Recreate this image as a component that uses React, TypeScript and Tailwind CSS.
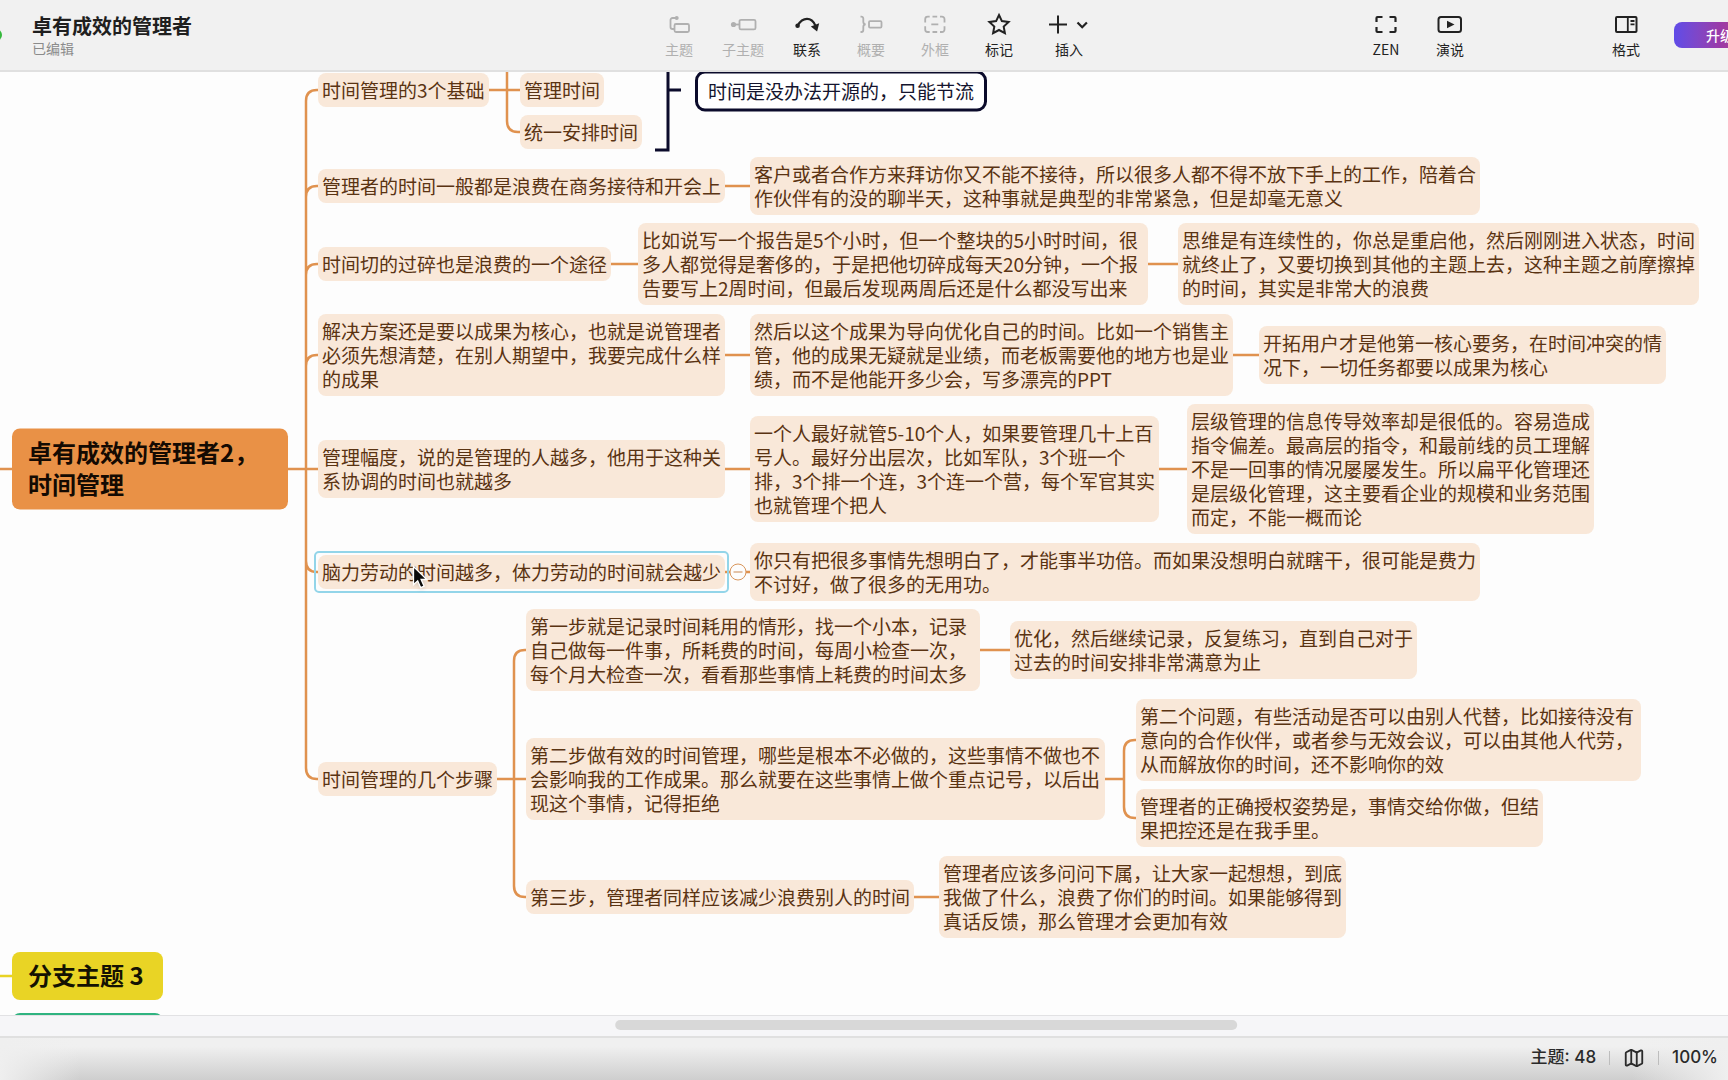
import type { ReactNode } from "react";
import { Map } from "lucide-react";

interface Topic {
  id: string;
  x: number;
  // vertical centre of the topic on the canvas
  y: number;
  minWidth: number;
  lines: string[];
  selected?: boolean;
}

const TOPICS: Topic[] = [
  { id: "base", x: 318, y: 18, minWidth: 171, lines: ["时间管理的3个基础"] },
  { id: "base-manage", x: 520, y: 18, minWidth: 84, lines: ["管理时间"] },
  { id: "base-plan", x: 520, y: 60, minWidth: 121, lines: ["统一安排时间"] },
  { id: "waste", x: 318, y: 114, minWidth: 402, lines: ["管理者的时间一般都是浪费在商务接待和开会上"] },
  {
    id: "waste-visit",
    x: 750,
    y: 114,
    minWidth: 718,
    lines: [
      "客户或者合作方来拜访你又不能不接待，所以很多人都不得不放下手上的工作，陪着合",
      "作伙伴有的没的聊半天，这种事就是典型的非常紧急，但是却毫无意义",
    ],
  },
  { id: "pieces", x: 318, y: 192, minWidth: 290, lines: ["时间切的过碎也是浪费的一个途径"] },
  {
    id: "pieces-report",
    x: 638,
    y: 192,
    minWidth: 510,
    lines: [
      "比如说写一个报告是5个小时，但一个整块的5小时时间，很",
      "多人都觉得是奢侈的，于是把他切碎成每天20分钟，一个报",
      "告要写上2周时间，但最后发现两周后还是什么都没写出来",
    ],
  },
  {
    id: "pieces-mind",
    x: 1178,
    y: 192,
    minWidth: 513,
    lines: [
      "思维是有连续性的，你总是重启他，然后刚刚进入状态，时间",
      "就终止了，又要切换到其他的主题上去，这种主题之前摩擦掉",
      "的时间，其实是非常大的浪费",
    ],
  },
  {
    id: "solution",
    x: 318,
    y: 283,
    minWidth: 402,
    lines: [
      "解决方案还是要以成果为核心，也就是说管理者",
      "必须先想清楚，在别人期望中，我要完成什么样",
      "的成果",
    ],
  },
  {
    id: "solution-result",
    x: 750,
    y: 283,
    minWidth: 480,
    lines: [
      "然后以这个成果为导向优化自己的时间。比如一个销售主",
      "管，他的成果无疑就是业绩，而老板需要他的地方也是业",
      "绩，而不是他能开多少会，写多漂亮的PPT",
    ],
  },
  {
    id: "solution-user",
    x: 1259,
    y: 283,
    minWidth: 402,
    lines: ["开拓用户才是他第一核心要务，在时间冲突的情", "况下，一切任务都要以成果为核心"],
  },
  {
    id: "span",
    x: 318,
    y: 397,
    minWidth: 402,
    lines: ["管理幅度，说的是管理的人越多，他用于这种关", "系协调的时间也就越多"],
  },
  {
    id: "span-army",
    x: 750,
    y: 397,
    minWidth: 407,
    lines: [
      "一个人最好就管5-10个人，如果要管理几十上百",
      "号人。最好分出层次，比如军队，3个班一个",
      "排，3个排一个连，3个连一个营，每个军官其实",
      "也就管理个把人",
    ],
  },
  {
    id: "span-layer",
    x: 1187,
    y: 397,
    minWidth: 402,
    lines: [
      "层级管理的信息传导效率却是很低的。容易造成",
      "指令偏差。最高层的指令，和最前线的员工理解",
      "不是一回事的情况屡屡发生。所以扁平化管理还",
      "是层级化管理，这主要看企业的规模和业务范围",
      "而定，不能一概而论",
    ],
  },
  {
    id: "brain",
    x: 318,
    y: 500,
    minWidth: 402,
    lines: ["脑力劳动的时间越多，体力劳动的时间就会越少"],
    selected: true,
  },
  {
    id: "brain-think",
    x: 750,
    y: 500,
    minWidth: 724,
    lines: [
      "你只有把很多事情先想明白了，才能事半功倍。而如果没想明白就瞎干，很可能是费力",
      "不讨好，做了很多的无用功。",
    ],
  },
  { id: "steps", x: 318, y: 707, minWidth: 177, lines: ["时间管理的几个步骤"] },
  {
    id: "step1",
    x: 526,
    y: 578,
    minWidth: 454,
    lines: [
      "第一步就是记录时间耗用的情形，找一个小本，记录",
      "自己做每一件事，所耗费的时间，每周小检查一次，",
      "每个月大检查一次，看看那些事情上耗费的时间太多",
    ],
  },
  {
    id: "step1-repeat",
    x: 1010,
    y: 578,
    minWidth: 402,
    lines: ["优化，然后继续记录，反复练习，直到自己对于", "过去的时间安排非常满意为止"],
  },
  {
    id: "step2",
    x: 526,
    y: 707,
    minWidth: 579,
    lines: [
      "第二步做有效的时间管理，哪些是根本不必做的，这些事情不做也不",
      "会影响我的工作成果。那么就要在这些事情上做个重点记号，以后出",
      "现这个事情，记得拒绝",
    ],
  },
  {
    id: "step2-replace",
    x: 1136,
    y: 668,
    minWidth: 505,
    lines: [
      "第二个问题，有些活动是否可以由别人代替，比如接待没有",
      "意向的合作伙伴，或者参与无效会议，可以由其他人代劳，",
      "从而解放你的时间，还不影响你的效",
    ],
  },
  {
    id: "step2-grant",
    x: 1136,
    y: 746,
    minWidth: 402,
    lines: ["管理者的正确授权姿势是，事情交给你做，但结", "果把控还是在我手里。"],
  },
  { id: "step3", x: 526, y: 825, minWidth: 383, lines: ["第三步，管理者同样应该减少浪费别人的时间"] },
  {
    id: "step3-ask",
    x: 939,
    y: 825,
    minWidth: 402,
    lines: [
      "管理者应该多问问下属，让大家一起想想，到底",
      "我做了什么，浪费了你们的时间。如果能够得到",
      "真话反馈，那么管理才会更加有效",
    ],
  },
];

// straight links: [from x, to x, y]
const LINKS = [
  [0, 14, 397],
  [288, 318, 397],
  [480, 520, 18],
  [700, 750, 114],
  [600, 638, 192],
  [1140, 1178, 192],
  [700, 750, 283],
  [1220, 1259, 283],
  [700, 750, 397],
  [1150, 1187, 397],
  [700, 750, 500],
  [480, 526, 707],
  [970, 1010, 578],
  [1100, 1124, 707],
  [900, 939, 825],
];

const RADIUS = 11;

// vertical trunks with the y of every branch that bends off them
const TRUNKS = [
  { x: 306, y: 397, endX: 318, branches: [18, 114, 192, 283, 500, 707] },
  { x: 507, y: -20, endX: 520, branches: [60] },
  { x: 514, y: 707, endX: 526, branches: [578, 825] },
  { x: 1124, y: 707, endX: 1136, branches: [668, 746] },
];

function trunkPath({ x, y, endX, branches }: (typeof TRUNKS)[number]) {
  const bends = branches.map((b) => (b < y ? b + RADIUS : b - RADIUS));
  const top = Math.min(y, ...bends);
  const bottom = Math.max(y, ...bends);
  const curves = branches.map((b, i) => `M${x} ${bends[i]}Q${x} ${b} ${x + RADIUS} ${b}H${endX}`);
  return `M${x} ${top}V${bottom}${curves.join("")}`;
}

function Connectors() {
  return (
    <svg className="absolute inset-0 w-full h-full" fill="none" strokeWidth="2.5" aria-hidden="true">
      <g stroke="#e0924f">
        {LINKS.map(([from, to, y]) => (
          <path key={`${from}-${y}`} d={`M${from} ${y}H${to}`} />
        ))}
        {TRUNKS.map((trunk) => (
          <path key={trunk.x} d={trunkPath(trunk)} />
        ))}
      </g>
      <path d="M0 904H14" stroke="#e8d324" />
      <path d="M668 -4V78H655M668 18H681" stroke="#0b0b2b" strokeWidth="3" />
    </svg>
  );
}

function TopicBox({ topic }: { topic: Topic }) {
  return (
    <div
      className="absolute -translate-y-1/2 rounded-lg bg-[#f9e8d9] px-1 py-[5px] text-[19px] leading-6 text-[#5a3312] whitespace-nowrap"
      style={{ left: topic.x, top: topic.y, minWidth: topic.minWidth }}
    >
      {topic.lines.map((line) => (
        <p key={line}>{line}</p>
      ))}
      {topic.selected && (
        <span className="absolute -inset-1 rounded-[5px] border-2 border-[#93d5e9] pointer-events-none" />
      )}
    </div>
  );
}

function Icon({ children }: { children: ReactNode }) {
  return (
    <svg
      viewBox="0 0 28 24"
      className="w-7 h-6"
      fill="none"
      stroke="currentColor"
      strokeWidth="1.8"
      aria-hidden="true"
    >
      {children}
    </svg>
  );
}

interface ToolButtonProps {
  label: string;
  disabled?: boolean;
  wide?: boolean;
  children: ReactNode;
}

function ToolButton({ label, disabled, wide, children }: ToolButtonProps) {
  return (
    <button
      type="button"
      disabled={disabled}
      className={`flex flex-col items-center gap-[3px] pt-px shrink-0 text-sm leading-5 text-[#222] disabled:text-[#b0b0b0] ${
        wide ? "w-[76px]" : "w-16"
      }`}
    >
      <span className="flex items-center h-6">{children}</span>
      {label}
    </button>
  );
}

function Toolbar() {
  return (
    <header className="flex items-center h-[72px] shrink-0 bg-[#f1f1f1] border-b-2 border-[#e0e0e0] overflow-hidden">
      <div className="flex items-center flex-1">
        <span className="w-3 h-3 -ml-[10px] rounded-full bg-[#35b83c]" />
        <div className="ml-[30px] pb-[2px]">
          <h1 className="text-xl leading-7 font-bold text-[#1f1f1f]">卓有成效的管理者</h1>
          <p className="text-sm leading-4 text-[#8b8b8b]">已编辑</p>
        </div>
      </div>

      <nav className="flex pl-[26px]">
        <ToolButton label="主题" disabled>
          <Icon>
            <rect x="9.5" y="12" width="14.5" height="8" rx="1.5" />
            <path d="M11 6H7.5a2 2 0 0 0-2 2v7a2 2 0 0 0 2 2h2" />
            <circle cx="11.7" cy="6" r="2" fill="currentColor" stroke="none" />
          </Icon>
        </ToolButton>
        <ToolButton label="子主题" disabled>
          <Icon>
            <circle cx="4.5" cy="12.5" r="2.6" fill="currentColor" stroke="none" />
            <path d="M5 12.5h5.5" />
            <rect x="10.5" y="7.8" width="16" height="9.6" rx="1.5" />
          </Icon>
        </ToolButton>
        <ToolButton label="联系">
          <Icon>
            <circle cx="4.6" cy="13.7" r="2.3" fill="currentColor" stroke="none" />
            <path d="M4.6 13.5C7.2 9 10.4 6.8 14 6.8c3.8 0 6.5 2.4 8.3 6.6" strokeWidth="2.2" />
            <path d="M17.8 14.4l8.4-3.2-2.1 8.2z" fill="currentColor" stroke="none" />
          </Icon>
        </ToolButton>
        <ToolButton label="概要" disabled>
          <Icon>
            <path d="M3.5 4.6h.8a2 2 0 0 1 2 2v3.2q0 2.5 2.4 2.5-2.4 0-2.4 2.5V18a2 2 0 0 1-2 2h-.8" />
            <rect x="12" y="9.2" width="12.5" height="6.4" rx="1" />
          </Icon>
        </ToolButton>
        <ToolButton label="外框" disabled>
          <Icon>
            <path d="M4.2 10.5V7.2a2.5 2.5 0 0 1 2.5-2.5h2M19 4.7h2a2.5 2.5 0 0 1 2.5 2.5v3.3M23.5 14.2v3.3A2.5 2.5 0 0 1 21 20h-2M8.7 20h-2a2.5 2.5 0 0 1-2.5-2.5v-3.3M11.5 4.7h4.7M11.5 20h4.7M10.3 12.3h7" />
          </Icon>
        </ToolButton>
        <ToolButton label="标记">
          <Icon>
            <path
              d="M14 3l2.9 6.1 6.7.9-4.9 4.6 1.2 6.6-5.9-3.2-5.9 3.2 1.2-6.600-4.900-4.600 6.700-.9z"
              strokeWidth="2"
            />
          </Icon>
        </ToolButton>
        <ToolButton label="插入" wide>
          <svg
            viewBox="0 0 40 24"
            className="w-10 h-6"
            fill="none"
            stroke="currentColor"
            strokeWidth="2"
            aria-hidden="true"
          >
            <path d="M9 3.5v18M0 12.5h18" />
            <path d="M28.5 10.5l4.700 4.800 4.700-4.800" strokeWidth="2.2" />
          </svg>
        </ToolButton>
      </nav>

      <div className="flex items-center justify-end flex-1">
        <ToolButton label="ZEN">
          <Icon>
            <path
              d="M4.5 10V6a1 1 0 0 1 1-1h5M17.5 5h5a1 1 0 0 1 1 1v4M23.5 15v4a1 1 0 0 1-1 1h-5M10.5 20h-5a1 1 0 0 1-1-1v-4"
              strokeWidth="2.2"
            />
          </Icon>
        </ToolButton>
        <ToolButton label="演说">
          <Icon>
            <rect x="2.5" y="5" width="22.5" height="15" rx="2.5" strokeWidth="2" />
            <path d="M11 8.800v7.400l7.500-3.700z" fill="currentColor" stroke="none" />
          </Icon>
        </ToolButton>
        <div className="flex items-center ml-28">
          <ToolButton label="格式">
            <Icon>
              <rect x="4" y="5" width="20.500" height="15" rx="1" strokeWidth="2" />
              <path d="M15.800 5v15M18.500 9h4M18.500 12.300h4" />
            </Icon>
          </ToolButton>
          <button
            type="button"
            className="ml-4 -mr-[38px] w-[92px] h-[26px] shrink-0 rounded-lg bg-linear-to-r from-[#5f4be8] via-[#9a3aa8] to-[#d03a6a] text-sm font-medium text-white"
          >
            升级
          </button>
        </div>
      </div>
    </header>
  );
}

function Canvas() {
  return (
    <main className="relative flex-1 overflow-hidden bg-[#fdfdfd]">
      <Connectors />

      <div className="absolute left-[12px] top-[397px] -translate-y-1/2 w-[276px] rounded-lg bg-[#e99146] px-4 pt-[7px] pb-[10px] text-2xl leading-8 font-bold text-[#140a02]">
        <p>卓有成效的管理者2，</p>
        <p>时间管理</p>
      </div>

      {TOPICS.map((topic) => (
        <TopicBox key={topic.id} topic={topic} />
      ))}

      <div className="absolute left-[695px] top-[19px] -translate-y-1/2 rounded-[10px] border-[3px] border-[#0b0b2b] bg-white px-[10px] pt-[5px] pb-[6px] text-[19px] leading-6 text-[#14142e] whitespace-nowrap">
        时间是没办法开源的，只能节流
      </div>

      <button
        type="button"
        aria-label="收起"
        className="absolute left-[738px] top-[500px] -translate-x-1/2 -translate-y-1/2 flex items-center justify-center w-[17px] h-[17px] rounded-full border border-[#d9965c] bg-[#fdfdfd]"
      >
        <span className="w-[9px] h-px bg-[#c98a55]" />
      </button>

      <div className="absolute left-[12px] top-[880px] min-w-[151px] rounded-lg bg-[#e9d425] px-4 pt-[7px] pb-[9px] text-2xl leading-8 font-bold text-[#141202]">
        分支主题 3
      </div>
      <div className="absolute left-[12px] top-[941px] w-[151px] h-12 rounded-lg bg-[#2fb380]" />

      <svg
        viewBox="0 0 18 26"
        className="absolute left-[412px] top-[493px] w-[18px] h-[26px] drop-shadow-sm"
        aria-hidden="true"
      >
        <path
          d="M1.500 1.500v18.300l4.200-4 3 6.900 3.400-1.500-3-6.700h5.700z"
          fill="#0a0a0a"
          stroke="#fff"
          strokeWidth="1.300"
        />
      </svg>
    </main>
  );
}

function StatusBar() {
  return (
    <footer className="relative flex items-center justify-end h-11 shrink-0 border-t-2 border-[#e0e0e0] bg-linear-to-b from-[#f0f0f0] from-20% to-[#cecece] pr-[10px] pb-[2px] font-[Inter,'Noto_Sans_CJK_SC',sans-serif] text-[17px] font-medium text-[#2a2a2a]">
      <div className="absolute inset-y-0 left-0 w-20 bg-linear-to-r from-[#efefef] to-transparent" />
      <div className="absolute inset-y-0 right-0 w-24 bg-linear-to-l from-[#efefef] to-transparent" />
      <div className="relative flex items-center gap-[13px]">
        <span>主题: 48</span>
        <span className="w-px h-[14px] bg-[#bdbdbd]" />
        <button type="button" aria-label="导航图">
          <Map size={22} strokeWidth={2} strokeLinejoin="miter" />
        </button>
        <span className="w-px h-[14px] bg-[#bdbdbd]" />
        <button type="button">100%</button>
      </div>
    </footer>
  );
}

export default function App() {
  return (
    <div className="flex flex-col h-screen overflow-hidden font-['Noto_Sans_CJK_SC',sans-serif]">
      <Toolbar />
      <Canvas />
      <div className="h-[21px] shrink-0 border-t border-[#e2e2e4] bg-[#f6f6f8] pt-1">
        <div className="mx-auto w-[36%] h-[10px] translate-x-[10%] rounded-full bg-[#d8d8d8]" />
      </div>
      <StatusBar />
    </div>
  );
}
